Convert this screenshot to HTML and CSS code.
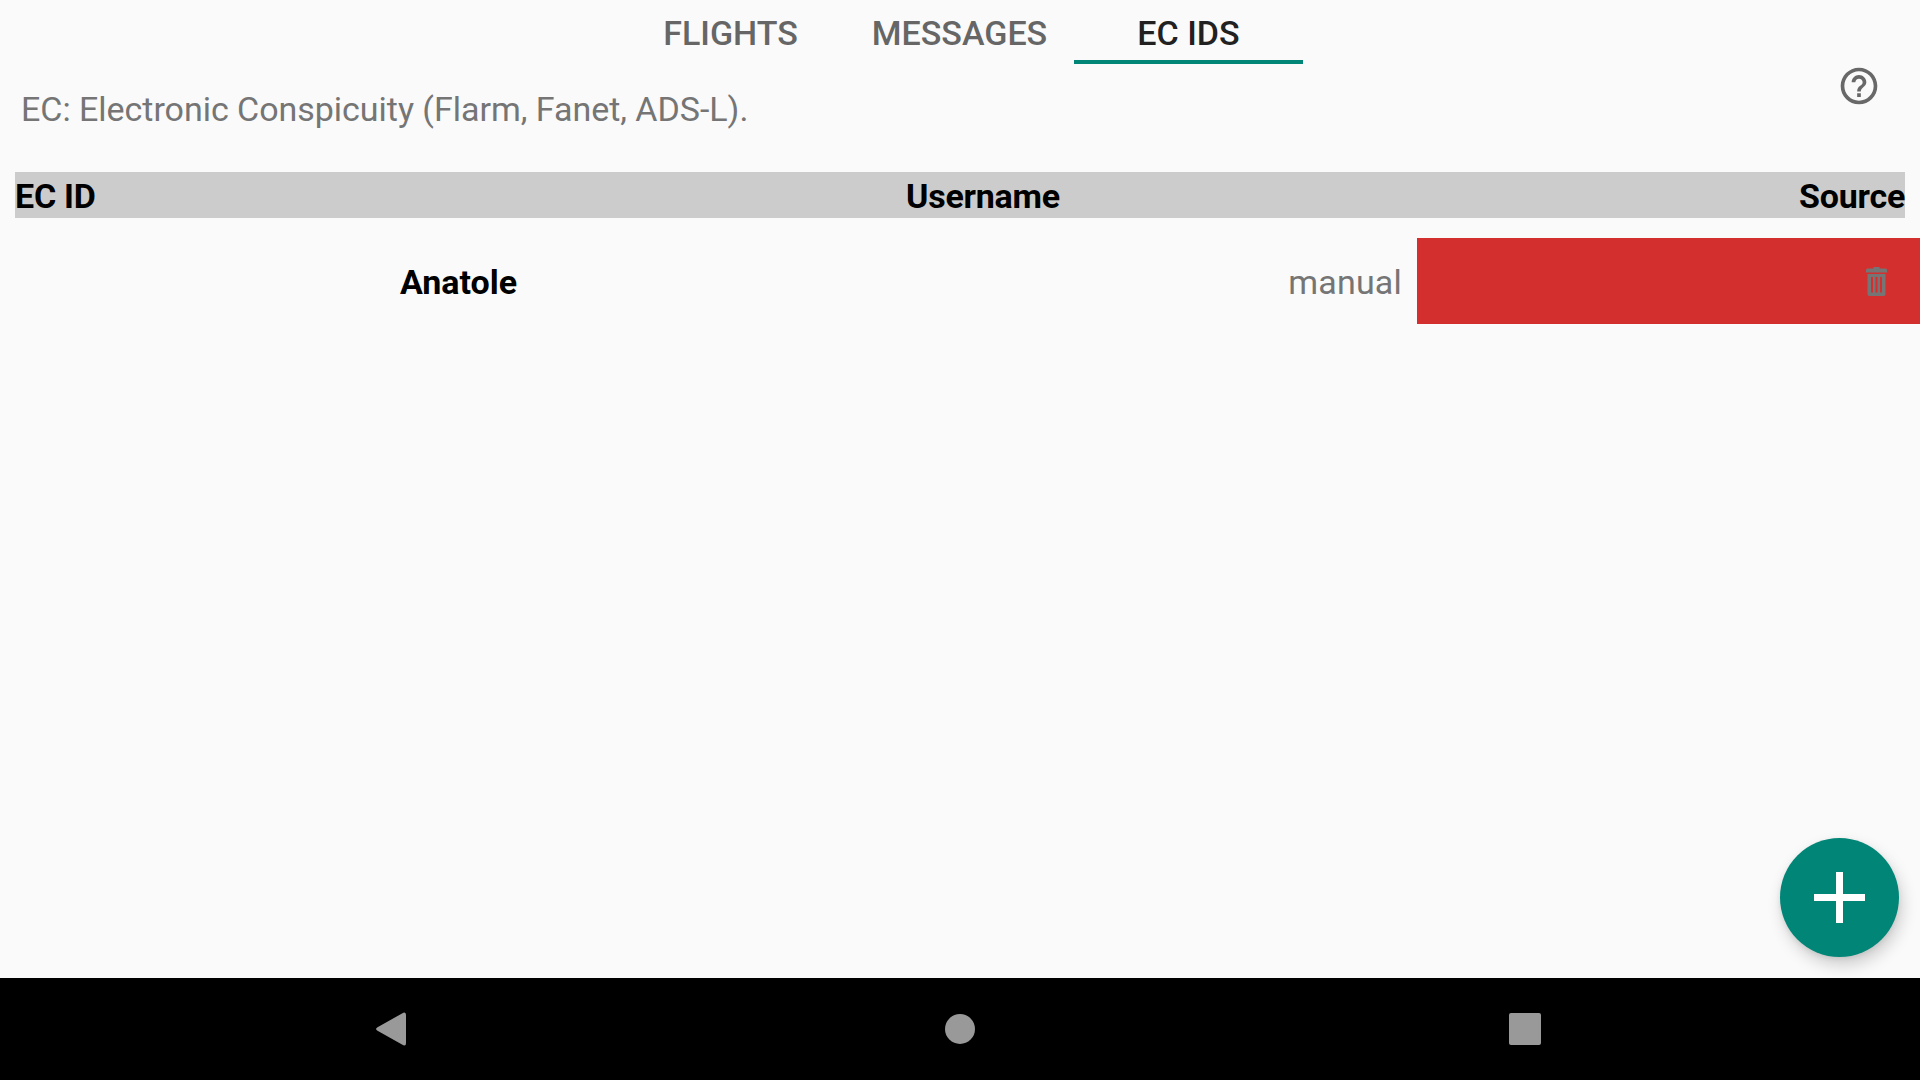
FILE: index.html
```html
<!DOCTYPE html>
<html lang="en">

<head>
    <meta charset="UTF-8">
    <meta name="viewport" content="width=device-width, initial-scale=1.0">
    <title>EC IDs</title>
    <link rel="stylesheet" href="styles.css">
</head>

<body>

    <div class="screen">
        <div class="content">
            <div class="tabs">
                <div class="tab">FLIGHTS</div>
                <div class="tab">MESSAGES</div>
                <div class="tab active">EC IDS</div>
            </div>

            <p class="intro">EC: Electronic Conspicuity (Flarm, Fanet, ADS-L).</p>

            <svg class="help-icon" viewBox="0 0 24 24">
                <path d="M11 18h2v-2h-2v2zm1-16C6.48 2 2 6.48 2 12s4.48 10 10 10 10-4.48 10-10S17.52 2 12 2zm0 18c-4.41 0-8-3.59-8-8s3.59-8 8-8 8 3.59 8 8-3.59 8-8 8zm0-14c-2.21 0-4 1.79-4 4h2c0-1.1.9-2 2-2s2 .9 2 2c0 2-3 1.75-3 5h2c0-2.25 3-2.5 3-5 0-2.21-1.79-4-4-4z" />
            </svg>

            <div class="table-head">
                <div class="head-id">EC ID</div>
                <div class="head-name">Username</div>
                <div class="head-source">Source</div>
            </div>

            <div class="row">
                <div class="row-name">Anatole</div>
                <div class="row-source">manual</div>
                <div class="row-delete">
                    <svg class="trash-icon" viewBox="0 0 21 29">
                        <path d="M7.5 0h6v1.5h6a1.5 1.5 0 0 1 1.5 1.5v2.5H0V3a1.5 1.5 0 0 1 1.5-1.5h6z" />
                        <path fill-rule="evenodd" d="M1.5 7h18v20a2 2 0 0 1-2 2h-14a2 2 0 0 1-2-2zM5 10v15.500h2V10zm4.500 0v15.500h2V10zm4.500 0v15.500h2V10z" />
                    </svg>
                </div>
            </div>

            <div class="fab">
                <svg class="fab-icon" viewBox="0 0 51 51">
                    <path d="M22 0h7v22h22v7H29v22h-7V29H0v-7h22z" />
                </svg>
            </div>
        </div>

        <div class="nav-bar">
            <svg class="nav-back" viewBox="0 0 30 34">
                <path d="M28.500 0.500Q30 0.500 30 3V31Q30 33.500 28.500 33.500Q27.500 33.500 26 32.500L1.500 18.800Q0 17.800 0 17Q0 16.200 1.500 15.200L26 1.500Q27.500 0.500 28.500 0.500Z" />
            </svg>
            <div class="nav-home"></div>
            <div class="nav-recent"></div>
        </div>
    </div>

</body>

</html>
```

FILE: styles.css
```css
body {
    font-family: Roboto, "Liberation Sans", sans-serif;
    margin: 0;
    padding: 0;
    background-color: #fafafa;
}

.screen {
    display: flex;
    flex-direction: column;
    height: 100vh;
    overflow: hidden;
}

.content {
    flex: 1;
    position: relative;
}

.tabs {
    display: flex;
    justify-content: center;
    padding-right: 1px;
}

.tab {
    width: 229px;
    height: 54px;
    padding-top: 6px;
    display: flex;
    align-items: center;
    justify-content: center;
    font-size: 34px;
    font-weight: 500;
    color: #666;
    border-bottom: 4px solid transparent;
}

.tab.active {
    color: #212121;
    border-bottom-color: #008577;
}

.intro {
    margin: 25px 0 0 21px;
    font-size: 34px;
    line-height: 40px;
    letter-spacing: -0.03px;
    color: #757575;
}

.help-icon {
    position: absolute;
    top: 64px;
    left: 1837px;
    width: 44px;
    height: 44px;
    fill: #686868;
}

.table-head {
    display: flex;
    align-items: center;
    height: 46px;
    padding-top: 2px;
    box-sizing: border-box;
    margin: 43px 15px 0;
    background-color: #cccccc;
    font-size: 34px;
    font-weight: 700;
    letter-spacing: -0.25px;
    color: #000;
}

.head-id {
    width: 891px;
}

.head-source {
    margin-left: auto;
}

.row {
    display: flex;
    align-items: center;
    height: 86px;
    margin-top: 20px;
    font-size: 34px;
}

.row-name {
    width: 917px;
    padding-top: 2px;
    text-align: center;
    font-weight: 700;
    color: #000;
}

.row-source {
    flex: 1;
    text-align: right;
    padding-top: 2px;
    padding-right: 15px;
    letter-spacing: 0.2px;
    color: #757575;
}

.row-delete {
    width: 470px;
    height: 100%;
    padding-right: 33px;
    display: flex;
    align-items: center;
    justify-content: flex-end;
    background-color: #d32f2f;
}

.trash-icon {
    width: 21px;
    height: 29px;
    fill: #757575;
}

.fab {
    position: absolute;
    top: 838px;
    left: 1780px;
    width: 119px;
    height: 119px;
    border-radius: 50%;
    background-color: #008577;
    box-shadow: 3px 8px 16px rgba(0, 0, 0, 0.18), 0 2px 5px rgba(0, 0, 0, 0.08);
    display: flex;
    align-items: center;
    justify-content: center;
}

.fab-icon {
    width: 51px;
    height: 51px;
    fill: #fff;
}

.nav-bar {
    height: 102px;
    background-color: #000;
    display: flex;
    align-items: center;
}

.nav-back {
    width: 30px;
    height: 34px;
    margin-left: 376px;
    fill: #999;
}

.nav-home {
    width: 30px;
    height: 30px;
    margin-left: 539px;
    border-radius: 50%;
    background-color: #999;
}

.nav-recent {
    width: 32px;
    height: 32px;
    margin-left: 534px;
    border-radius: 2px;
    background-color: #999;
}
```
